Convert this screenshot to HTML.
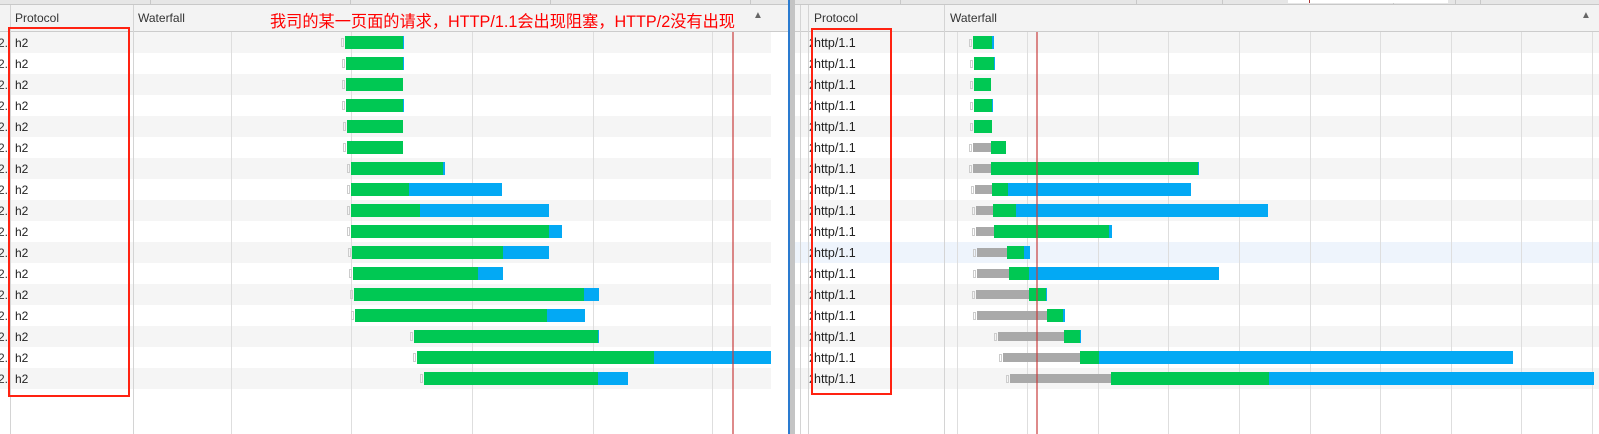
<!DOCTYPE html>
<html><head><meta charset="utf-8">
<style>
*{margin:0;padding:0;box-sizing:border-box}
body{width:1599px;height:434px;overflow:hidden;background:#fff;font-family:"Liberation Sans",sans-serif;font-size:12px;color:#222;position:relative}
.a{position:absolute}
</style></head><body>
<div id="root"></div>
<script>
var h='';
function R(x,y,w,hh,c,extra){h+='<div class="a" style="left:'+x+'px;top:'+y+'px;width:'+w+'px;height:'+hh+'px;background:'+c+';'+(extra||'')+'"></div>';}
function T(x,y,t,st){h+='<div class="a" style="left:'+x+'px;top:'+y+'px;white-space:nowrap;'+(st||'')+'">'+t+'</div>';}
R(0,0,1599,5,'#e6e6e6');R(0,4,1599,1,'#c8c8c8');
[150,350,550,750,900,1136,1222,1393,1455,1480].forEach(function(x){R(x,0,1,4,'#c8c8c8')});
R(1288,0,106,3,'#fff');R(1394,0,54,3,'#fff');R(1309,0,1,3,'#a33');
R(0,5,788,26,'#f3f3f3');R(795,5,804,26,'#f3f3f3');
R(0,31,788,1,'#ccc');R(795,31,804,1,'#ccc');
var ROW=21,TOP=32;
for(var i=0;i<17;i++){R(0,TOP+i*ROW,771,ROW,i%2==0?'#f5f5f5':'#fff');}
for(var i=0;i<17;i++){R(795,TOP+i*ROW,804,ROW,i==10?'#eef4fc':(i%2==0?'#f5f5f5':'#fff'));}
[10,133].forEach(function(x){R(x,5,1,429,'#d4d4d4')});
[231,351,472,593,712].forEach(function(x){R(x,32,1,402,'#dedede')});
R(788,0,2,434,'#2a7bd0');R(790,0,5,434,'#c4c4c4');
[800,808,944].forEach(function(x){R(x,5,1,429,'#d4d4d4')});
[957,1027,1098,1168,1239,1310,1380,1451,1521,1592].forEach(function(x){R(x,32,1,402,'#dedede')});
T(15,11,'Protocol','color:#333');T(138,11,'Waterfall','color:#333');
T(814,11,'Protocol','color:#333');T(950,11,'Waterfall','color:#333');
T(753,10,'▲','font-size:10px;color:#666');T(1581,10,'▲','font-size:10px;color:#666');
T(270,8,'我司的某一页面的请求，HTTP/1.1会出现阻塞，HTTP/2没有出现','color:#f00;font-size:16.2px;font-family:\"Noto Sans CJK SC\",sans-serif;line-height:20px');
var L=[[345,403,404],[346,403,404],[346,403,403],[346,403,404],[347,403,403],[347,403,403],[351,443,445],[351,409,502],[351,420,549],[351,549,562],[352,503,549],[353,478,503],[354,584,599],[355,547,585],[414,598,599],[417,654,771],[424,598,628]];
L.forEach(function(b,i){var y=TOP+i*ROW;
 T(-2,y+4,'2...','color:#333;width:10px;overflow:hidden');
 T(15,y+4,'h2');
 R(b[0]-4,y+6,3,9,'transparent','border:1px solid #ccc');
 R(b[0],y+4,b[1]-b[0],13,'#00c853');
 if(b[2]>b[1])R(b[1],y+4,b[2]-b[1],13,'#03a9f4');
});
var Rb=[[973,973,992,994],[974,974,994,995],[974,974,991,991],[974,974,992,993],[974,974,992,992],[973,991,1006,1006],[973,991,1198,1199],[975,992,1008,1191],[976,993,1016,1268],[976,994,1109,1112],[977,1007,1024,1030],[977,1009,1029,1219],[976,1029,1046,1047],[977,1047,1063,1065],[998,1064,1080,1081],[1003,1080,1099,1513],[1010,1111,1269,1594]];
Rb.forEach(function(b,i){var y=TOP+i*ROW;
 T(809,y+4,'2','color:#333;width:4px;overflow:hidden');
 T(814,y+4,'http/1.1','font-size:12.5px');
 R(b[0]-4,y+7,3,8,'transparent','border:1px solid #ccc');
 if(b[1]>b[0])R(b[0],y+6,b[1]-b[0],9,'#a9a9a9');
 R(b[1],y+4,b[2]-b[1],13,'#00c853');
 if(b[3]>b[2])R(b[2],y+4,b[3]-b[2],13,'#03a9f4');
});
R(732,32,2,402,'rgba(200,60,60,0.6)');R(1036,32,2,402,'rgba(200,60,60,0.6)');
R(8,27,122,370,'transparent','border:2px solid #f21;');
R(811,28,81,367,'transparent','border:2px solid #f21;');
document.getElementById('root').innerHTML=h;
</script>
</body></html>
